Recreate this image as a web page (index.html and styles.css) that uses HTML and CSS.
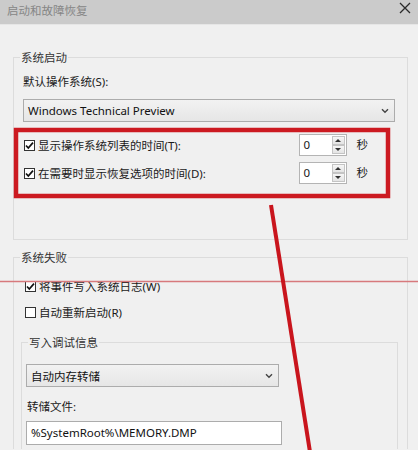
FILE: index.html
```html
<!DOCTYPE html>
<html lang="zh-CN">
<head>
<meta charset="utf-8">
<title>启动和故障恢复</title>
<link rel="stylesheet" href="styles.css">
</head>
<body>
<div class="window">
  <div class="titlebar">
    <span class="title">启动和故障恢复</span>
    <svg class="close" width="12" height="12" viewBox="0 0 12 12"><path d="M1 1 L11 11 M11 1 L1 11" stroke="#2a2a2a" stroke-width="1.3" fill="none"/></svg>
  </div>
  <div class="body">
    <div class="group g1">
      <div class="group-title">系统启动</div>
      <div class="label first">默认操作系统(S):</div>
      <div class="select wide"><span>Windows Technical Preview</span><svg class="chev" width="8" height="6" viewBox="0 0 8 6"><path d="M1 1.2 L4 4.2 L7 1.2" stroke="#444" stroke-width="1.4" fill="none"/></svg></div>
      <div class="rows">
        <div class="row">
          <div class="check-label"><span class="cb checked"><svg width="11" height="11" viewBox="0 0 11 11"><path d="M2 5.5 L4.3 8 L9 2.6" stroke="#111" stroke-width="1.7" fill="none"/></svg></span><span>显示操作系统列表的时间(T):</span></div>
          <div class="spin-group"><div class="spin"><span class="val">0</span><div class="btns"><span class="btn up"></span><span class="btn down"></span></div></div><span class="unit">秒</span></div>
        </div>
        <div class="row">
          <div class="check-label"><span class="cb checked"><svg width="11" height="11" viewBox="0 0 11 11"><path d="M2 5.5 L4.3 8 L9 2.6" stroke="#111" stroke-width="1.7" fill="none"/></svg></span><span>在需要时显示恢复选项的时间(D):</span></div>
          <div class="spin-group"><div class="spin"><span class="val">0</span><div class="btns"><span class="btn up"></span><span class="btn down"></span></div></div><span class="unit">秒</span></div>
        </div>
      </div>
    </div>
    <div class="group g2">
      <div class="group-title">系统失败</div>
      <div class="crow w"><span class="cb checked"><svg width="11" height="11" viewBox="0 0 11 11"><path d="M2 5.5 L4.3 8 L9 2.6" stroke="#111" stroke-width="1.7" fill="none"/></svg></span><span>将事件写入系统日志(W)</span></div>
      <div class="crow r"><span class="cb"></span><span>自动重新启动(R)</span></div>
      <div class="group inner">
        <div class="group-title">写入调试信息</div>
        <div class="select narrow"><span>自动内存转储</span><svg class="chev" width="8" height="6" viewBox="0 0 8 6"><path d="M1 1.2 L4 4.2 L7 1.2" stroke="#444" stroke-width="1.4" fill="none"/></svg></div>
        <div class="label dump">转储文件:</div>
        <div class="textbox">%SystemRoot%\MEMORY.DMP</div>
      </div>
    </div>
  </div>
  <svg class="annot" width="418" height="450" viewBox="0 0 418 450">
    <rect x="16" y="130" width="372" height="66" fill="none" stroke="#cc1a21" stroke-width="4.5"/>
    <line x1="0" y1="281.5" x2="418" y2="281.5" stroke="#d7797c" stroke-width="1.6"/>
    <line x1="271" y1="205" x2="310" y2="452" stroke="#c9151d" stroke-width="4"/>
  </svg>
</div>
</body>
</html>
```

FILE: styles.css
```css
* { box-sizing: border-box; }
html, body { margin: 0; padding: 0; }
body {
  width: 418px;
  height: 450px;
  overflow: hidden;
  background: #f0f0f0;
  font-family: "Noto Sans", "Noto Sans CJK SC", sans-serif;
  font-size: 11.5px;
  color: #1a1a1a;
}
.window { position: relative; width: 418px; height: 450px; overflow: hidden; }
.titlebar {
  height: 25px;
  background: #cbcbcb;
  border-bottom: 1px solid #e6e6e6;
  display: flex;
  align-items: center;
  justify-content: space-between;
  padding: 0 7px 0 7px;
}
.title { color: #868686; font-size: 11.5px; line-height: 16px; margin-top: -2px; }
.close { margin-top: -8px; }
.body { padding: 0 10px 0 13px; }
.group { border: 1px solid #dcdcdc; }
.g1 { margin-top: 32px; height: 183px; }
.g2 { margin-top: 17px; height: 192px; border-bottom: none; }
.group-title {
  width: fit-content;
  margin: -8px 0 0 6px;
  padding: 0 1px;
  line-height: 16px;
  background: #f0f0f0;
  color: #333;
}
.label { line-height: 16px; margin-left: 9px; }
.label.first { margin-top: 8px; }
.select {
  height: 23px;
  border: 1px solid #acacac;
  background: linear-gradient(#f2f2f2, #e6e6e6);
  display: flex;
  align-items: center;
  justify-content: space-between;
  padding: 0 5px 0 4px;
  color: #111;
}
.select.wide { margin: 9px 0 0 9px; width: 372px; }
.select.narrow { margin: 13px 0 0 4px; width: 253px; }
.rows { margin: 12px 0 0 10px; display: flex; flex-direction: column; gap: 6px; width: 344px; }
.row { height: 22px; display: flex; align-items: center; justify-content: space-between; }
.check-label { display: flex; align-items: center; gap: 3px; }
.cb {
  width: 11px; height: 11px;
  border: 1px solid #333;
  background: #fff;
  display: inline-flex;
  align-items: center;
  justify-content: center;
  flex: none;
}
.cb svg { display: block; margin: -1px; }
.spin-group { display: flex; align-items: center; gap: 10px; }
.spin {
  width: 48px; height: 22px;
  border: 1px solid #b4b4b4;
  background: #fff;
  display: flex;
  justify-content: space-between;
}
.val { padding-left: 4px; line-height: 20px; }
.btns { width: 14px; display: flex; flex-direction: column; padding: 1px 1px 1px 0; }
.btn {
  flex: 1;
  border: 1px solid #c4c4c4;
  background: linear-gradient(#f6f6f6, #e4e4e4);
  display: flex; align-items: center; justify-content: center;
}
.btn::before {
  content: "";
  border-left: 3px solid transparent;
  border-right: 3px solid transparent;
}
.btn.up::before { border-bottom: 3px solid #333; }
.btn.down::before { border-top: 3px solid #333; }
.unit { line-height: 16px; }
.crow { display: flex; align-items: center; gap: 3px; height: 20px; margin-left: 11px; }
.crow.w { margin-top: 10px; }
.crow.r { margin-top: 6px; }
.group.inner { margin: 20px 9px 0 7px; height: 107px; border-bottom: none; }
.label.dump { margin: 12px 0 0 5px; }
.textbox {
  margin: 6px 0 0 4px;
  width: 256px; height: 24px;
  border: 1px solid #acacac;
  background: #fff;
  line-height: 22px;
  padding-left: 4px;
  color: #111;
}
.annot { position: absolute; left: 0; top: 0; pointer-events: none; }
```
